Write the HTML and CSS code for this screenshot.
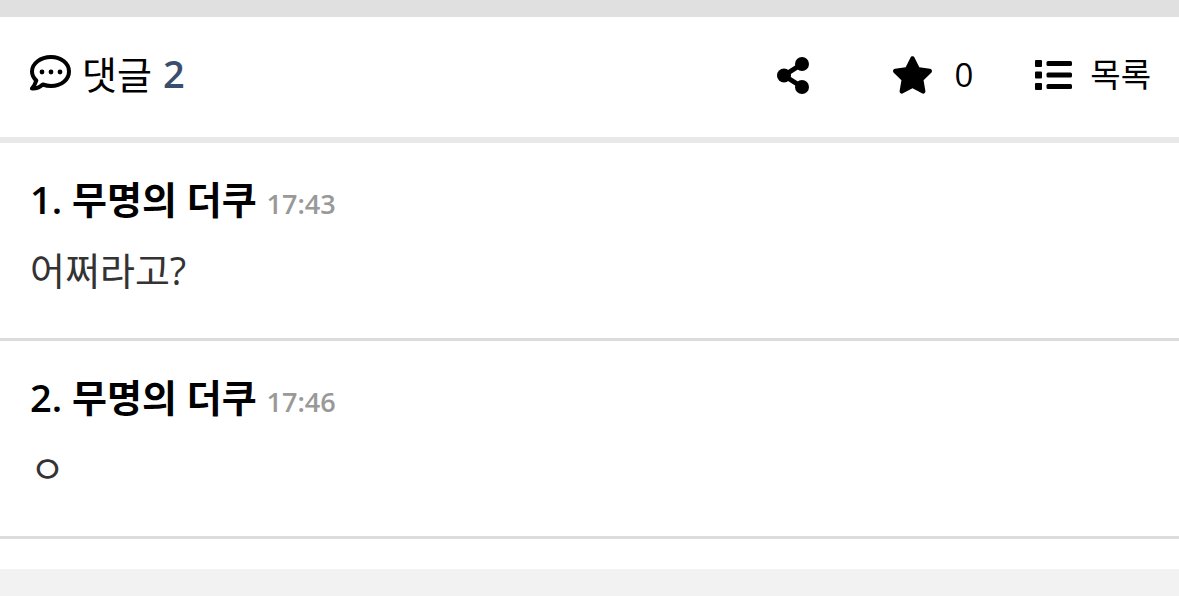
FILE: index.html
```html
<!DOCTYPE html>
<html lang="ko">
<head>
<meta charset="utf-8">
<meta name="viewport" content="width=device-width">
<title>댓글</title>
<link rel="stylesheet" href="styles.css">
</head>
<body>
<main class="comments">
  <header class="toolbar">
    <h2 class="heading">
      <svg class="icon-bubble" viewBox="0 0 41 36" aria-hidden="true"><path fill="none" stroke="currentColor" stroke-width="4" stroke-linejoin="round" d="M21 2C10.500 2 2 8.500 2 16.500c0 3.700 1.700 6.500 4.300 9C5.500 28.500 4 31 2 33.500c4.500.3 8-1.500 10.800-4 2.500.9 5.200 1.500 8.200 1.500 10.500 0 18-6.500 18-14.500S31.500 2 21 2z"/><circle cx="12" cy="17" r="2.400"/><circle cx="21" cy="17" r="2.400"/><circle cx="30" cy="17" r="2.400"/></svg>
      <span class="label">댓글</span>
      <span class="count">2</span>
    </h2>
    <div class="actions">
      <button class="action action-share" type="button" aria-label="공유"><svg class="icon-share" viewBox="0 0 32 37" aria-hidden="true"><path fill="none" stroke="currentColor" stroke-width="5" d="M25 7 7 18.500 25 30"/><circle cx="25" cy="7" r="7"/><circle cx="7" cy="18.500" r="7"/><circle cx="25" cy="30" r="7"/></svg></button>
      <button class="action" type="button"><svg class="icon-star" viewBox="20 0 536 512" aria-hidden="true"><path d="M259.300 17.800 194 150.200 47.900 171.500c-26.200 3.800-36.700 36.100-17.700 54.600l105.700 103-25 145.500c-4.500 26.300 23.200 46 46.400 33.700L288 439.600l130.700 68.700c23.200 12.200 50.900-7.400 46.400-33.700l-25-145.500 105.700-103c19-18.500 8.500-50.800-17.700-54.600L382 150.200 316.700 17.800c-11.700-23.600-45.600-23.900-57.400 0z"/></svg><span>0</span></button>
      <a class="action action-list" href="#"><svg class="icon-list" viewBox="0 0 37 30" aria-hidden="true"><rect x="0" y="0" width="7" height="7" rx="1"/><rect x="0" y="11.500" width="7" height="7" rx="1"/><rect x="0" y="23" width="7" height="7" rx="1"/><rect x="11.500" y="1" width="25.500" height="5" rx="1.500"/><rect x="11.500" y="12.500" width="25.500" height="5" rx="1.500"/><rect x="11.500" y="24" width="25.500" height="5" rx="1.500"/></svg><span>목록</span></a>
    </div>
  </header>
  <article class="comment">
    <h3 class="author">1. 무명의 더쿠 <time class="time">17:43</time></h3>
    <p class="body">어쩌라고?</p>
  </article>
  <article class="comment">
    <h3 class="author">2. 무명의 더쿠 <time class="time">17:46</time></h3>
    <p class="body">ㅇ</p>
  </article>
</main>
</body>
</html>
```
FILE: styles.css
```css
* { box-sizing: border-box; }
body {
  margin: 0;
  background: #f2f2f2;
  color: #000;
  font-family: "Open Sans", "Noto Sans CJK KR", sans-serif;
}
h2, h3, p { margin: 0; }
svg { display: block; fill: currentColor; }
.comments {
  background: #fff;
  border-top: 17px solid #e0e0e0;
  padding-bottom: 30px;
}
.toolbar {
  display: flex;
  align-items: flex-start;
  justify-content: space-between;
  padding: 29px 28px 33px 30px;
  border-bottom: 6px solid #e8e8e8;
}
.heading {
  display: flex;
  align-items: center;
  gap: 11px;
  font-size: 38px;
  font-weight: 400;
  line-height: 54px;
}
.label { font-family: "Noto Sans CJK KR", sans-serif; }
.count { color: #3a4f70; font-weight: 600; }
.actions {
  display: flex;
  align-items: center;
  gap: 62px;
}
.action {
  display: flex;
  align-items: center;
  gap: 22px;
  padding: 0;
  border: 0;
  background: none;
  color: #000;
  font-family: "Open Sans", "Noto Sans CJK KR", sans-serif;
  font-size: 33px;
  font-weight: 400;
  line-height: 58px;
  text-decoration: none;
}
.action-share { margin-right: 22px; }
.action-list { gap: 18px; }
.icon-bubble { width: 41px; height: 36px; }
.icon-share { width: 32px; height: 37px; }
.icon-star { width: 39px; height: 38px; }
.icon-list { width: 37px; height: 30px; }
.comment {
  padding: 28px 30px 40px;
  border-bottom: 3px solid #dcdcdc;
}
.author {
  font-size: 38px;
  font-weight: 600;
  line-height: 56px;
}
.time { color: #999; font-size: 27px; line-height: 28px; }
.body {
  margin-top: 15px;
  color: #333;
  font-size: 38px;
  line-height: 56px;
}
```
